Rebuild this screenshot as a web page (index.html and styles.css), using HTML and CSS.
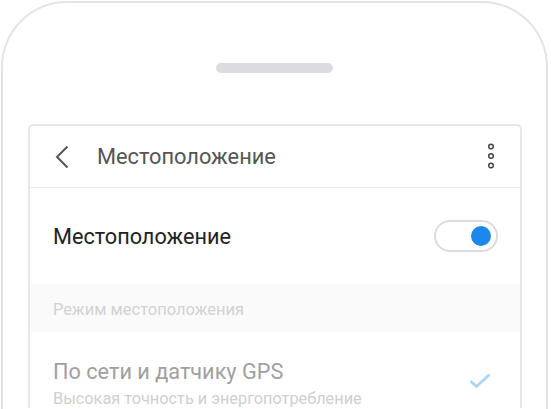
FILE: index.html
```html
<!DOCTYPE html>
<html lang="ru">
<head>
<meta charset="utf-8">
<link rel="stylesheet" href="styles.css">
</head>
<body>
<div class="phone">
  <div class="speaker"></div>
  <div class="card">
    <div class="header">
      <svg class="back" width="14" height="24" viewBox="0 0 14 24"><path d="M12.5 1.5 L2 12 L12.5 22.5" fill="none" stroke="#555" stroke-width="2"/></svg>
      <span class="title">Местоположение</span>
      <svg class="more" width="8" height="26" viewBox="0 0 8 26"><circle cx="4" cy="3.5" r="2.3" fill="none" stroke="#444" stroke-width="1.5"/><circle cx="4" cy="13" r="2.3" fill="none" stroke="#444" stroke-width="1.5"/><circle cx="4" cy="22.5" r="2.3" fill="none" stroke="#444" stroke-width="1.5"/></svg>
    </div>
    <div class="row">
      <span class="label">Местоположение</span>
      <div class="toggle"><div class="knob"></div></div>
    </div>
    <div class="section">Режим местоположения</div>
    <div class="option">
      <div class="texts">
        <div class="opt-title">По сети и датчику GPS</div>
        <div class="opt-sub">Высокая точность и энергопотребление</div>
      </div>
      <svg class="check" width="22" height="16" viewBox="0 0 22 16"><path d="M1.5 8 L7.5 13.5 L20.5 1.5" fill="none" stroke="#a9d3f7" stroke-width="2.6"/></svg>
    </div>
  </div>
</div>
</body>
</html>
```
FILE: styles.css
```css
html, body {
  margin: 0;
  padding: 0;
  background: #fff;
  overflow: hidden;
}
body {
  font-family: Roboto, "Noto Sans", sans-serif;
}
.phone {
  margin: 1px 0 0 1px;
  width: 543px;
  height: 600px;
  border: 2px solid #e4e4e7;
  border-bottom: none;
  border-radius: 66px 66px 0 0;
  display: flex;
  flex-direction: column;
  align-items: center;
}
.speaker {
  margin-top: 60px;
  width: 117px;
  height: 10px;
  border-radius: 5px;
  background: #dadce0;
  flex: none;
}
.card {
  margin-top: 51px;
  width: 490px;
  border: 2px solid #e8e8eb;
  border-bottom: none;
  border-radius: 5px 5px 0 0;
  align-self: flex-start;
  margin-left: 25px;
}
.header {
  height: 61px;
  border-bottom: 1px solid #ececee;
  display: flex;
  align-items: center;
  padding: 0 25px 0 25px;
}
.back {
  display: block;
  margin-top: 1px;
}
.title {
  margin-left: 28px;
  font-size: 21.8px;
  color: #555;
  flex: 1;
}
.more {
  display: block;
  margin-top: -1px;
}
.row {
  height: 96px;
  display: flex;
  align-items: center;
  justify-content: space-between;
  padding: 0 22px 0 23px;
}
.label {
  font-size: 21.7px;
  color: #222;
  margin-top: 1px;
}
.toggle {
  width: 60px;
  height: 28px;
  border: 2px solid #dcdcdc;
  border-radius: 16px;
  position: relative;
}
.knob {
  position: absolute;
  right: 5px;
  top: 4px;
  width: 20px;
  height: 20px;
  border-radius: 50%;
  background: #1b88ea;
}
.section {
  height: 48px;
  background: #fafafa;
  display: flex;
  align-items: center;
  padding-left: 23px;
  font-size: 16.5px;
  color: #d2d2d2;
  padding-top: 2px;
  box-sizing: border-box;
}
.option {
  display: flex;
  align-items: flex-start;
  justify-content: space-between;
  padding: 27px 29px 0 23px;
}
.opt-title {
  font-size: 21.7px;
  color: #a0a0a0;
  line-height: 26px;
}
.opt-sub {
  font-size: 16.3px;
  color: #cfcfcf;
  margin-top: 4px;
}
.check {
  display: block;
  margin-top: 14px;
}
```
